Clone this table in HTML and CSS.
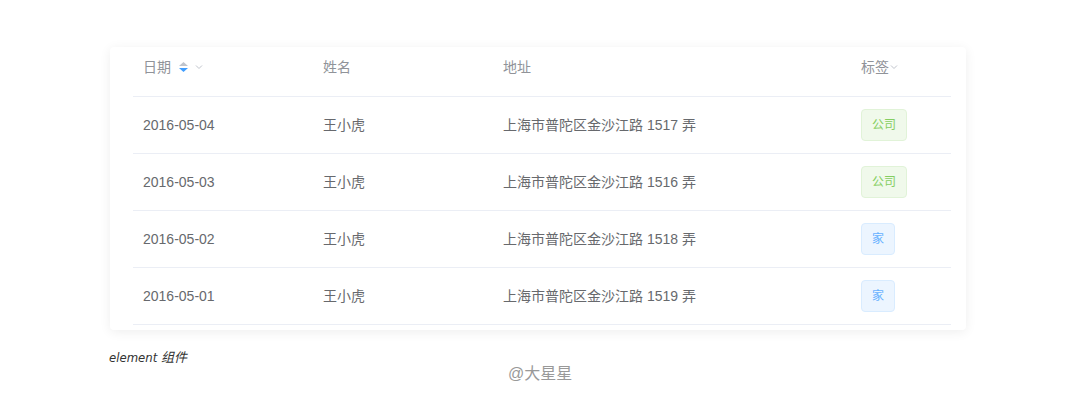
FILE: index.html
```html
<!DOCTYPE html>
<html>
<head>
<meta charset="utf-8">
<link rel="stylesheet" href="styles.css">
</head>
<body>
<div class="page">
  <div class="card">
    <div class="table">
      <div class="row head">
        <div class="c c-date">日期
          <span class="sort">
            <svg width="11" height="14" viewBox="0 0 11 14"><path d="M1 6 L5.5 2 L10 6 Z" fill="#c0c4cc"/><path d="M1 8 L5.5 12 L10 8 Z" fill="#409eff"/></svg>
          </span>
          <svg class="chev" width="8" height="6" viewBox="0 0 8 6"><path d="M1 1.5 L4 4.5 L7 1.5" fill="none" stroke="#c0c4cc" stroke-width="1"/></svg>
        </div>
        <div class="c c-name">姓名</div>
        <div class="c c-addr">地址</div>
        <div class="c c-tag">标签<svg class="chev2" width="8" height="6" viewBox="0 0 8 6"><path d="M1 1.5 L4 4.5 L7 1.5" fill="none" stroke="#c0c4cc" stroke-width="1"/></svg></div>
      </div>
      <div class="row">
        <div class="c c-date">2016-05-04</div>
        <div class="c c-name">王小虎</div>
        <div class="c c-addr">上海市普陀区金沙江路 1517 弄</div>
        <div class="c c-tag"><span class="tag green">公司</span></div>
      </div>
      <div class="row">
        <div class="c c-date">2016-05-03</div>
        <div class="c c-name">王小虎</div>
        <div class="c c-addr">上海市普陀区金沙江路 1516 弄</div>
        <div class="c c-tag"><span class="tag green">公司</span></div>
      </div>
      <div class="row">
        <div class="c c-date">2016-05-02</div>
        <div class="c c-name">王小虎</div>
        <div class="c c-addr">上海市普陀区金沙江路 1518 弄</div>
        <div class="c c-tag"><span class="tag blue">家</span></div>
      </div>
      <div class="row">
        <div class="c c-date">2016-05-01</div>
        <div class="c c-name">王小虎</div>
        <div class="c c-addr">上海市普陀区金沙江路 1519 弄</div>
        <div class="c c-tag"><span class="tag blue">家</span></div>
      </div>
    </div>
  </div>
  <div class="caption">element 组件</div>
  <div class="credit">@大星星</div>
</div>
</body>
</html>
```
FILE: styles.css
```css
* { box-sizing: border-box; }
html, body { margin: 0; padding: 0; background: #fff; }
body {
  width: 1080px;
  height: 403px;
  overflow: hidden;
  font-family: "Liberation Sans", "Noto Sans CJK SC", sans-serif;
  font-size: 14px;
  color: #67696d;
}
.page { padding: 47px 0 0 110px; }
.card {
  width: 856px;
  height: 283px;
  background: #fff;
  box-shadow: 0 2px 12px 0 rgba(0, 0, 0, 0.07);
  border-radius: 4px;
  padding: 0 15px 0 23px;
}
.table { display: flex; flex-direction: column; }
.row {
  display: flex;
  height: 57px;
  align-items: center;
  border-bottom: 1px solid #ebeef5;
}
.row.head {
  height: 50px;
  align-items: flex-start;
  padding-top: 10px;
  color: #909399;
}
.c { padding-left: 10px; line-height: 20px; display: flex; align-items: center; }
.c-date { width: 180px; }
.c-name { width: 180px; }
.c-addr { width: 358px; }
.c-tag { width: 100px; }
.sort { display: inline-flex; margin-left: 7px; }
.chev { margin-left: 6px; }
.chev2 { margin-left: 1px; }
.tag {
  display: inline-flex;
  align-items: center;
  height: 32px;
  padding: 0 10px;
  font-size: 12px;
  border-radius: 4px;
  border: 1px solid;
}
.tag.green { background: #f0f9eb; border-color: #e1f3d8; color: #85ce61; }
.tag.blue { background: #ecf5ff; border-color: #d9ecff; color: #66b1ff; }
.caption {
  margin-top: 20px;
  margin-left: -1px;
  font-family: "DejaVu Sans Condensed", "Noto Sans CJK SC", sans-serif;
  font-style: italic;
  font-size: 13px;
  color: #333;
  line-height: 16px;
}
.credit {
  margin-top: -2px;
  margin-left: 398px;
  font-size: 16px;
  color: #999;
  line-height: 20px;
}
```
